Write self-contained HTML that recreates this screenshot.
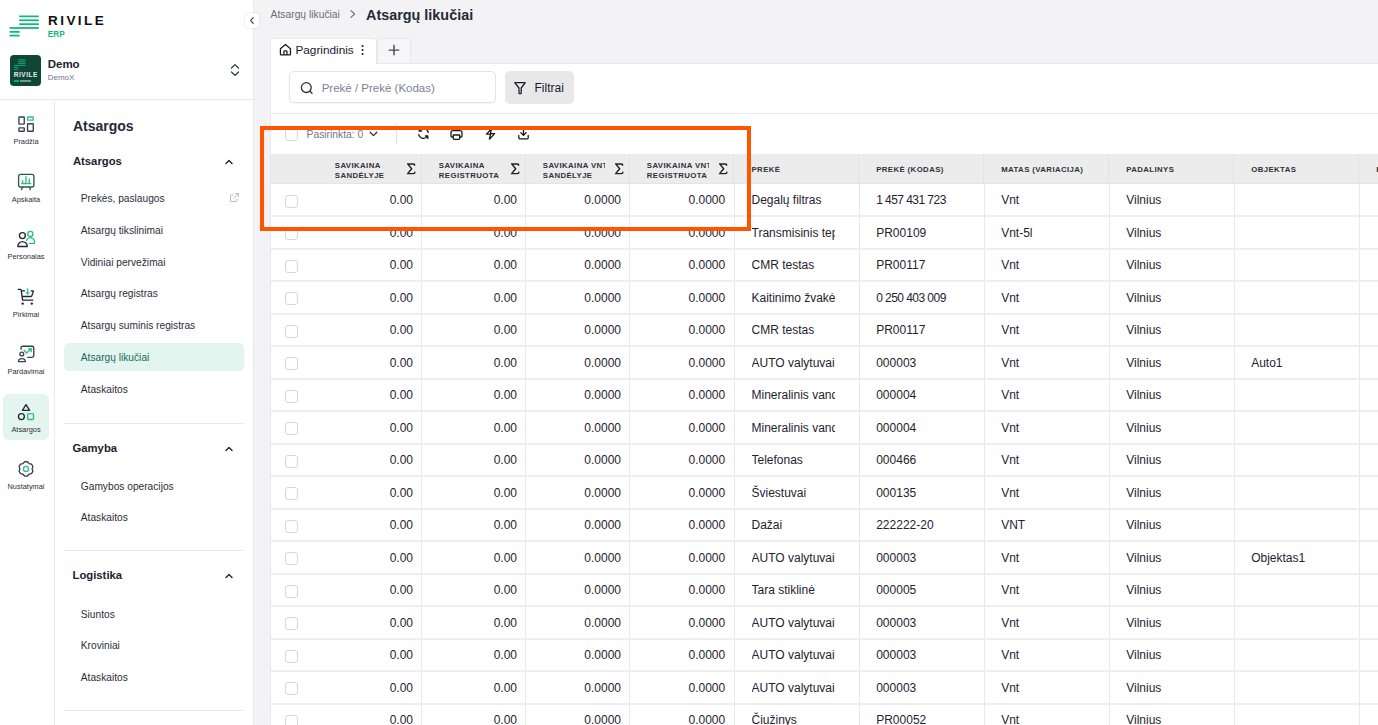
<!DOCTYPE html>
<html><head><meta charset="utf-8">
<style>
*{box-sizing:border-box;margin:0;padding:0}
html,body{width:1378px;height:725px;overflow:hidden;background:#f3f3f6;font-family:"Liberation Sans",sans-serif;color:#1f2230}
.a{position:absolute}
.t{position:absolute;white-space:nowrap;line-height:1}
</style></head><body>
<div class="a" style="left:0px;top:0px;width:253px;height:725px;background:#fff"></div>
<div class="a" style="left:253px;top:0px;width:1px;height:725px;background:#e9e9ec"></div>
<svg class="a" style="left:0px;top:0px;" width="50" height="45" viewBox="0 0 50 45" fill="none"><rect x="19.2" y="15.5" width="19.6" height="1.75" fill="#10b67a"/><rect x="19.2" y="19.4" width="19.6" height="1.75" fill="#10b67a"/><rect x="19.2" y="23.3" width="19.6" height="1.75" fill="#10b67a"/><rect x="9.6" y="27.1" width="29.2" height="1.75" fill="#10b67a"/><rect x="9.6" y="31.0" width="10" height="1.75" fill="#10b67a"/><rect x="9.6" y="34.7" width="10" height="1.75" fill="#10b67a"/></svg>
<div class="t" style="left:48.00px;top:13.87px;font-size:13.5px;font-weight:bold;color:#111;letter-spacing:2.45px;">RIVILE</div>
<div class="t" style="left:47.80px;top:31.06px;font-size:8.2px;font-weight:bold;color:#10b67a;">ERP</div>
<div class="a" style="left:10px;top:55px;width:31px;height:31px;background:#0e4735;border-radius:4px"></div>
<svg class="a" style="left:0px;top:0px;" width="50" height="90" viewBox="0 0 50 90" fill="none"><rect x="17.9" y="59.3" width="7.7" height="0.95" fill="#12a873"/><rect x="17.9" y="61.2" width="7.7" height="0.95" fill="#12a873"/><rect x="17.9" y="63.1" width="7.7" height="0.95" fill="#12a873"/><rect x="14" y="64.9" width="11.6" height="0.95" fill="#12a873"/><rect x="14" y="66.9" width="4.2" height="0.95" fill="#12a873"/><rect x="14" y="68.8" width="4.2" height="0.95" fill="#12a873"/></svg>
<div class="t" style="left:13.80px;top:71.60px;font-size:6.5px;font-weight:bold;color:#e9eeeb;letter-spacing:0.5px;">RIVILE</div>
<div class="a" style="left:14px;top:80px;width:4.5px;height:2.4px;background:#12a873"></div>
<div class="a" style="left:19.5px;top:80.3px;width:11px;height:2px;background:#c9d6d0;opacity:.55"></div>
<div class="t" style="left:47.70px;top:59.17px;font-size:11.5px;font-weight:bold;color:#1f2230;">Demo</div>
<div class="t" style="left:47.70px;top:74.23px;font-size:8px;font-weight:normal;color:#6f7590;">DemoX</div>
<svg class="a" style="left:229px;top:62px;" width="12" height="16" viewBox="0 0 12 16" fill="none"><path d="M2.5 6 L6 2.6 L9.5 6 M2.5 10 L6 13.4 L9.5 10" stroke="#2b2e3a" stroke-width="1.2" stroke-linecap="round" stroke-linejoin="round"/></svg>
<div class="a" style="left:0px;top:99px;width:253px;height:1px;background:#e9e9ec"></div>
<div class="a" style="left:54px;top:100px;width:1px;height:625px;background:#ececef"></div>
<div class="a" style="left:3px;top:394px;width:46px;height:46px;background:#e3f5ee;border-radius:6px"></div>
<svg class="a" style="left:14px;top:112px;" width="24" height="24" viewBox="0 0 24 24" fill="none"><rect x="4.95" y="4.95" width="5.3" height="7.1" rx="0.5" stroke="#3b3e4b" stroke-width="1.35" stroke-linecap="round" stroke-linejoin="round"/><rect x="4.95" y="15.85" width="5.3" height="3.4" rx="0.5" stroke="#3b3e4b" stroke-width="1.35" stroke-linecap="round" stroke-linejoin="round"/><rect x="13.55" y="4.95" width="5.7" height="3.2" rx="0.5" stroke="#2ebd86" stroke-width="1.35" stroke-linecap="round" stroke-linejoin="round"/><rect x="13.55" y="11.75" width="5.7" height="7.5" rx="0.5" stroke="#3b3e4b" stroke-width="1.35" stroke-linecap="round" stroke-linejoin="round"/></svg>
<div class="t" style="left:-34.00px;width:120px;text-align:center;top:138.24px;font-size:7.4px;font-weight:normal;color:#2b2e3a;">Pradžia</div>
<svg class="a" style="left:14px;top:170px;" width="24" height="24" viewBox="0 0 24 24" fill="none"><rect x="4.6" y="4.4" width="15.3" height="12.6" rx="2" stroke="#2f5a4c" stroke-width="1.35" stroke-linecap="round" stroke-linejoin="round"/><path d="M8.4 17.2 L7.6 19.6 M15.6 17.2 L16.4 19.6" stroke="#2f5a4c" stroke-width="1.35" stroke-linecap="round" stroke-linejoin="round"/><path d="M7.6 13.6 H16.8 M8.6 13.4 V10.6 M12 13.4 V6.6 M15.3 13.4 V9.2" stroke="#2ebd86" stroke-width="1.35" stroke-linecap="round" stroke-linejoin="round"/></svg>
<div class="t" style="left:-34.00px;width:120px;text-align:center;top:195.74px;font-size:7.4px;font-weight:normal;color:#2b2e3a;">Apskaita</div>
<svg class="a" style="left:14px;top:227px;" width="24" height="24" viewBox="0 0 24 24" fill="none"><circle cx="8.4" cy="8.6" r="2.95" stroke="#23263a" stroke-width="1.35" stroke-linecap="round" stroke-linejoin="round"/><path d="M3.8 19.5 H13.3 A4.75 4.9 0 0 0 3.8 19.5 Z" stroke="#23263a" stroke-width="1.35" stroke-linecap="round" stroke-linejoin="round"/><circle cx="16.3" cy="6.9" r="2.55" stroke="#2ebd86" stroke-width="1.35" stroke-linecap="round" stroke-linejoin="round"/><path d="M12.6 13.5 A4.1 4.1 0 0 1 20.4 16.4 H15.3" stroke="#2ebd86" stroke-width="1.35" stroke-linecap="round" stroke-linejoin="round"/></svg>
<div class="t" style="left:-34.00px;width:120px;text-align:center;top:252.74px;font-size:7.4px;font-weight:normal;color:#2b2e3a;">Personalas</div>
<svg class="a" style="left:14px;top:285px;" width="24" height="24" viewBox="0 0 24 24" fill="none"><path d="M4.3 4.4 H6.3 Q7 4.4 7.2 5.2 L8.6 15.1 H18.9 M8.2 11.5 H17 Q17.6 11.5 17.8 10.9 L19.4 6.3 Q19.5 5.9 19 5.9 H17.2 M8 5.9 H10.5" stroke="#23263a" stroke-width="1.35" stroke-linecap="round" stroke-linejoin="round"/><circle cx="8.7" cy="18.6" r="1.2" fill="#23263a"/><circle cx="17.8" cy="18.6" r="1.2" fill="#23263a"/><path d="M13.6 4 V8.5" stroke="#2ebd86" stroke-width="1.35" stroke-linecap="round" stroke-linejoin="round"/><path d="M11.4 7.3 H15.8 L13.6 9.9 Z" fill="#2ebd86"/></svg>
<div class="t" style="left:-34.00px;width:120px;text-align:center;top:310.74px;font-size:7.4px;font-weight:normal;color:#2b2e3a;">Pirkimai</div>
<svg class="a" style="left:14px;top:342px;" width="24" height="24" viewBox="0 0 24 24" fill="none"><path d="M7 7.2 V6 Q7 4.2 8.8 4.2 H18 Q19.8 4.2 19.8 6 V13.5 Q19.8 15.3 18 15.3 H13.8" stroke="#3b3e4b" stroke-width="1.35" stroke-linecap="round" stroke-linejoin="round"/><circle cx="7.8" cy="12" r="1.9" stroke="#3b3e4b" stroke-width="1.35" stroke-linecap="round" stroke-linejoin="round"/><path d="M4.5 19.6 H11.3 A3.4 3 0 0 0 4.5 19.6 Z" stroke="#3b3e4b" stroke-width="1.35" stroke-linecap="round" stroke-linejoin="round"/><path d="M10 8.2 L12.6 11 L15.6 8.2" stroke="#2ebd86" stroke-width="1.35" stroke-linecap="round" stroke-linejoin="round"/><path d="M14.2 6.5 H17.6 V9.9 Z" fill="#2ebd86" stroke="#2ebd86" stroke-width="0.8" stroke-linejoin="round"/></svg>
<div class="t" style="left:-34.00px;width:120px;text-align:center;top:367.74px;font-size:7.4px;font-weight:normal;color:#2b2e3a;">Pardavimai</div>
<svg class="a" style="left:14px;top:400px;" width="24" height="24" viewBox="0 0 24 24" fill="none"><path d="M12 4.6 L15.6 10.3 H8.4 Z" stroke="#23263a" stroke-width="1.35" stroke-linecap="round" stroke-linejoin="round"/><circle cx="7.4" cy="16.6" r="2.95" stroke="#23263a" stroke-width="1.35" stroke-linecap="round" stroke-linejoin="round"/><rect x="13.6" y="13.6" width="5.9" height="5.9" rx="1" stroke="#2ebd86" stroke-width="1.35" stroke-linecap="round" stroke-linejoin="round"/></svg>
<div class="t" style="left:-34.00px;width:120px;text-align:center;top:425.74px;font-size:7.4px;font-weight:normal;color:#2b2e3a;">Atsargos</div>
<svg class="a" style="left:14px;top:457px;" width="24" height="24" viewBox="0 0 24 24" fill="none"><path d="M8.95 6.62 L10.61 4.73 L13.39 4.73 L15.05 6.62 L17.51 7.11 L18.90 9.52 L18.10 11.90 L18.90 14.28 L17.51 16.69 L15.05 17.18 L13.39 19.07 L10.61 19.07 L8.95 17.18 L6.49 16.69 L5.10 14.28 L5.90 11.90 L5.10 9.52 L6.49 7.11 Z" stroke="#3b3e4b" stroke-width="1.35" stroke-linecap="round" stroke-linejoin="round"/><circle cx="12" cy="11.9" r="2.55" stroke="#2ebd86" stroke-width="1.35" stroke-linecap="round" stroke-linejoin="round"/></svg>
<div class="t" style="left:-34.00px;width:120px;text-align:center;top:482.74px;font-size:7.4px;font-weight:normal;color:#2b2e3a;">Nustatymai</div>
<div class="t" style="left:72.90px;top:119.05px;font-size:14px;font-weight:bold;color:#262936;">Atsargos</div>
<div class="t" style="left:72.90px;top:155.83px;font-size:11.3px;font-weight:bold;color:#1f2230;">Atsargos</div>
<svg class="a" style="left:224px;top:157.5px;" width="10" height="8" viewBox="0 0 10 8" fill="none"><path d="M2 5.6 L5 2.6 L8 5.6" stroke="#1f2230" stroke-width="1.4" stroke-linecap="round" stroke-linejoin="round"/></svg>
<div class="a" style="left:64px;top:343px;width:180px;height:28px;background:#e3f5ee;border-radius:5px"></div>
<div class="t" style="left:80.80px;top:194.17px;font-size:10.2px;font-weight:normal;color:#2b2e3a;">Prekės, paslaugos</div>
<div class="t" style="left:80.80px;top:225.97px;font-size:10.2px;font-weight:normal;color:#2b2e3a;">Atsargų tikslinimai</div>
<div class="t" style="left:80.80px;top:258.17px;font-size:10.2px;font-weight:normal;color:#2b2e3a;">Vidiniai pervežimai</div>
<div class="t" style="left:80.80px;top:289.17px;font-size:10.2px;font-weight:normal;color:#2b2e3a;">Atsargų registras</div>
<div class="t" style="left:80.80px;top:320.97px;font-size:10.2px;font-weight:normal;color:#2b2e3a;">Atsargų suminis registras</div>
<div class="t" style="left:80.80px;top:352.87px;font-size:10.2px;font-weight:normal;color:#176a5e;">Atsargų likučiai</div>
<div class="t" style="left:80.80px;top:384.67px;font-size:10.2px;font-weight:normal;color:#2b2e3a;">Ataskaitos</div>
<svg class="a" style="left:228px;top:191px;" width="13" height="13" viewBox="0 0 13 13" fill="none"><path d="M7.5 2.5 H10.5 V5.5 M10.5 2.5 L6 7 M9 8 V10 Q9 10.5 8.5 10.5 H3 Q2.5 10.5 2.5 10 V4.5 Q2.5 4 3 4 H5" stroke="#b9bcc4" stroke-width="1" stroke-linecap="round" stroke-linejoin="round"/></svg>
<div class="a" style="left:64px;top:423px;width:180px;height:1px;background:#e9e9ec"></div>
<div class="t" style="left:72.50px;top:442.83px;font-size:11.3px;font-weight:bold;color:#1f2230;">Gamyba</div>
<svg class="a" style="left:224px;top:444.5px;" width="10" height="8" viewBox="0 0 10 8" fill="none"><path d="M2 5.6 L5 2.6 L8 5.6" stroke="#1f2230" stroke-width="1.4" stroke-linecap="round" stroke-linejoin="round"/></svg>
<div class="t" style="left:80.80px;top:481.57px;font-size:10.2px;font-weight:normal;color:#2b2e3a;">Gamybos operacijos</div>
<div class="t" style="left:80.80px;top:513.27px;font-size:10.2px;font-weight:normal;color:#2b2e3a;">Ataskaitos</div>
<div class="a" style="left:64px;top:550px;width:180px;height:1px;background:#e9e9ec"></div>
<div class="t" style="left:72.50px;top:570.03px;font-size:11.3px;font-weight:bold;color:#1f2230;">Logistika</div>
<svg class="a" style="left:224px;top:571.7px;" width="10" height="8" viewBox="0 0 10 8" fill="none"><path d="M2 5.6 L5 2.6 L8 5.6" stroke="#1f2230" stroke-width="1.4" stroke-linecap="round" stroke-linejoin="round"/></svg>
<div class="t" style="left:80.80px;top:610.37px;font-size:10.2px;font-weight:normal;color:#2b2e3a;">Siuntos</div>
<div class="t" style="left:80.80px;top:641.27px;font-size:10.2px;font-weight:normal;color:#2b2e3a;">Kroviniai</div>
<div class="t" style="left:80.80px;top:673.37px;font-size:10.2px;font-weight:normal;color:#2b2e3a;">Ataskaitos</div>
<div class="a" style="left:64px;top:710px;width:180px;height:1px;background:#e9e9ec"></div>
<div class="a" style="left:245px;top:13px;width:14px;height:15px;background:#fff;border-radius:4px;box-shadow:0 0 2px rgba(0,0,0,.18)"></div>
<svg class="a" style="left:245px;top:13px;" width="14" height="15" viewBox="0 0 14 15" fill="none"><path d="M8.2 4.6 L5.6 7.5 L8.2 10.4" stroke="#2b2e3a" stroke-width="1.1" stroke-linecap="round" stroke-linejoin="round"/></svg>
<div class="t" style="left:270.60px;top:10.18px;font-size:10.3px;font-weight:normal;color:#6c6e78;">Atsargų likučiai</div>
<svg class="a" style="left:348px;top:9px;" width="10" height="10" viewBox="0 0 10 10" fill="none"><path d="M3 1.6 L6.6 5 L3 8.4" stroke="#6c6e78" stroke-width="1.1" stroke-linecap="round" stroke-linejoin="round"/></svg>
<div class="t" style="left:366.00px;top:7.81px;font-size:14.4px;font-weight:bold;color:#262936;">Atsargų likučiai</div>
<div class="a" style="left:270px;top:63px;width:1200px;height:700px;background:#fff;border:1px solid #e8e8eb"></div>
<div class="a" style="left:270px;top:38px;width:106.5px;height:26px;background:#fff;border:1px solid #e8e8eb;border-bottom:none;border-radius:4px 4px 0 0"></div>
<div class="a" style="left:377px;top:38px;width:33.5px;height:25px;background:#f6f6f8;border:1px solid #e8e8eb;border-bottom:none;border-radius:4px 4px 0 0"></div>
<svg class="a" style="left:277.6px;top:41.8px;" width="15" height="15" viewBox="0 0 15 15" fill="none"><g transform="scale(0.93)"><path d="M2.6 13.3 V7.2 L8 2.6 L13.4 7.2 V13.3 Q13.4 13.9 12.8 13.9 H3.2 Q2.6 13.9 2.6 13.3 Z M6.4 13.9 V10.2 Q6.4 9.6 7 9.6 H9 Q9.6 9.6 9.6 10.2 V13.9" stroke="#1a1a22" stroke-width="1.35" stroke-linejoin="round"/></g></svg>
<div class="t" style="left:295.40px;top:44.81px;font-size:11.8px;font-weight:normal;color:#1a1a2e;">Pagrindinis</div>
<svg class="a" style="left:359px;top:43px;" width="8" height="14" viewBox="0 0 8 14" fill="none"><circle cx="3.6" cy="3" r="1.05" fill="#1a1a22"/><circle cx="3.6" cy="7" r="1.05" fill="#1a1a22"/><circle cx="3.6" cy="11" r="1.05" fill="#1a1a22"/></svg>
<svg class="a" style="left:387px;top:43px;" width="14" height="14" viewBox="0 0 14 14" fill="none"><path d="M7 2.4 V11.8 M2.2 7.1 H11.8" stroke="#454854" stroke-width="1.45" stroke-linecap="round"/></svg>
<div class="a" style="left:288.6px;top:71.2px;width:207px;height:32.2px;background:#fff;border:1px solid #e4e4e7;border-radius:5px;box-shadow:0 1px 2px rgba(0,0,0,.05)"></div>
<svg class="a" style="left:299px;top:80px;" width="16" height="16" viewBox="0 0 16 16" fill="none"><circle cx="7.3" cy="7.6" r="4.9" stroke="#2a2c36" stroke-width="1.3"/><path d="M11 11.3 L13 13.2" stroke="#2a2c36" stroke-width="1.3" stroke-linecap="round"/></svg>
<div class="t" style="left:321.70px;top:82.67px;font-size:11.5px;font-weight:normal;color:#7d8193;">Prekė / Prekė (Kodas)</div>
<div class="a" style="left:505.2px;top:71px;width:68.7px;height:32.8px;background:#e8e8ea;border-radius:5px"></div>
<svg class="a" style="left:512px;top:80px;" width="16" height="16" viewBox="0 0 16 16" fill="none"><path d="M3.1 2.5 H12.9 Q13.3 2.5 13.1 2.9 L9.2 8 V12.9 Q9.2 13.6 8.6 13.6 H7.5 Q7 13.6 7 12.9 V8 L2.9 2.9 Q2.7 2.5 3.1 2.5 Z" stroke="#1a1a22" stroke-width="1.25" stroke-linejoin="round"/></svg>
<div class="t" style="left:534.50px;top:81.74px;font-size:12px;font-weight:normal;color:#1a1a2e;">Filtrai</div>
<div class="a" style="left:271px;top:113px;width:1200px;height:1px;background:#ececef"></div>
<div class="a" style="left:285.2px;top:128px;width:12.5px;height:13px;border:1px solid #d6d7dc;border-radius:3px;background:#fff"></div>
<div class="t" style="left:306.60px;top:130.38px;font-size:10.3px;font-weight:normal;color:#737685;">Pasirinkta: 0</div>
<svg class="a" style="left:368px;top:129px;" width="11" height="10" viewBox="0 0 11 10" fill="none"><path d="M2.2 3.3 L5.5 6.6 L8.8 3.3" stroke="#2a2c36" stroke-width="1.3" stroke-linecap="round" stroke-linejoin="round"/></svg>
<div class="a" style="left:396.2px;top:124px;width:1px;height:19.5px;background:#e3e3e6"></div>
<svg class="a" style="left:416px;top:126px;" width="15" height="15" viewBox="0 0 15 15" fill="none"><path d="M12.3 6.4 A5 5 0 0 0 3.2 5 M2.7 8.6 A5 5 0 0 0 11.8 10 M3.2 2.6 V5 H5.6 M11.8 12.4 V10 H9.4" stroke="#1a1a22" stroke-width="1.3" stroke-linecap="round" stroke-linejoin="round"/></svg>
<svg class="a" style="left:449px;top:126px;" width="15" height="15" viewBox="0 0 15 15" fill="none"><path d="M4.3 4.6 V3.4 Q4.3 2.6 5.1 2.6 H9.9 Q10.7 2.6 10.7 3.4 V4.6 M4.3 11 H3 Q2 11 2 10 V6.6 Q2 4.6 4 4.6 H11 Q13 4.6 13 6.6 V10 Q13 11 12 11 H10.7 M4.3 9 H10.7 V12.6 Q10.7 13.4 9.9 13.4 H5.1 Q4.3 13.4 4.3 12.6 Z" stroke="#1a1a22" stroke-width="1.3" stroke-linecap="round" stroke-linejoin="round"/></svg>
<svg class="a" style="left:483px;top:126px;" width="15" height="15" viewBox="0 0 15 15" fill="none"><path d="M8.6 2.6 L3.4 8.2 H7.6 L6.4 13.2 L11.6 7.6 H7.4 Z" stroke="#1a1a22" stroke-width="1.3" stroke-linecap="round" stroke-linejoin="round"/></svg>
<svg class="a" style="left:516px;top:126px;" width="15" height="15" viewBox="0 0 15 15" fill="none"><path d="M2.8 9.4 V12 Q2.8 12.8 3.6 12.8 H11.4 Q12.2 12.8 12.2 12 V9.4 M7.5 2.6 V9.4 M4.9 6.8 L7.5 9.4 L10.1 6.8" stroke="#1a1a22" stroke-width="1.3" stroke-linecap="round" stroke-linejoin="round"/></svg>
<div class="a" style="left:270.5px;top:154px;width:1110px;height:30px;background:#ececec"></div>
<div class="a" style="left:421px;top:154px;width:1px;height:30px;background:#e2e2e4"></div>
<div class="a" style="left:525px;top:154px;width:1px;height:30px;background:#e2e2e4"></div>
<div class="a" style="left:629px;top:154px;width:1px;height:30px;background:#e2e2e4"></div>
<div class="a" style="left:733px;top:154px;width:1px;height:30px;background:#e2e2e4"></div>
<div class="a" style="left:858px;top:154px;width:1px;height:30px;background:#e2e2e4"></div>
<div class="a" style="left:983px;top:154px;width:1px;height:30px;background:#e2e2e4"></div>
<div class="a" style="left:1108px;top:154px;width:1px;height:30px;background:#e2e2e4"></div>
<div class="a" style="left:1233px;top:154px;width:1px;height:30px;background:#e2e2e4"></div>
<div class="a" style="left:1358px;top:154px;width:1px;height:30px;background:#e2e2e4"></div>
<div class="a" style="left:271px;top:183px;width:1110px;height:1px;background:#e4e4e6"></div>
<div class="a" style="left:334.8px;top:158px;width:61.9px;height:24px;overflow:hidden"><div class="t" style="left:0.00px;top:3.70px;font-size:7.8px;font-weight:bold;color:#30313a;letter-spacing:0.4px;">SAVIKAINA</div>
<div class="t" style="left:0.00px;top:13.90px;font-size:7.8px;font-weight:bold;color:#30313a;letter-spacing:0.4px;">SANDĖLYJE</div>
</div><svg class="a" style="left:405.6px;top:162px;" width="11" height="13" viewBox="0 0 11 13" fill="none"><path d="M8.6 3.3 Q8.6 1.9 7.4 1.9 H1.6 L5.7 6.8 L1.6 11.6 H7.6 Q8.8 11.6 8.9 10.2" stroke="#1f2028" stroke-width="1.45" stroke-linecap="round" stroke-linejoin="round"/></svg>
<div class="a" style="left:438.8px;top:158px;width:61.9px;height:24px;overflow:hidden"><div class="t" style="left:0.00px;top:3.70px;font-size:7.8px;font-weight:bold;color:#30313a;letter-spacing:0.4px;">SAVIKAINA</div>
<div class="t" style="left:0.00px;top:13.90px;font-size:7.8px;font-weight:bold;color:#30313a;letter-spacing:0.4px;">REGISTRUOTA</div>
</div><svg class="a" style="left:509.6px;top:162px;" width="11" height="13" viewBox="0 0 11 13" fill="none"><path d="M8.6 3.3 Q8.6 1.9 7.4 1.9 H1.6 L5.7 6.8 L1.6 11.6 H7.6 Q8.8 11.6 8.9 10.2" stroke="#1f2028" stroke-width="1.45" stroke-linecap="round" stroke-linejoin="round"/></svg>
<div class="a" style="left:542.8px;top:158px;width:61.9px;height:24px;overflow:hidden"><div class="t" style="left:0.00px;top:3.70px;font-size:7.8px;font-weight:bold;color:#30313a;letter-spacing:0.4px;">SAVIKAINA VNT</div>
<div class="t" style="left:0.00px;top:13.90px;font-size:7.8px;font-weight:bold;color:#30313a;letter-spacing:0.4px;">SANDĖLYJE</div>
</div><svg class="a" style="left:613.6px;top:162px;" width="11" height="13" viewBox="0 0 11 13" fill="none"><path d="M8.6 3.3 Q8.6 1.9 7.4 1.9 H1.6 L5.7 6.8 L1.6 11.6 H7.6 Q8.8 11.6 8.9 10.2" stroke="#1f2028" stroke-width="1.45" stroke-linecap="round" stroke-linejoin="round"/></svg>
<div class="a" style="left:646.8px;top:158px;width:61.9px;height:24px;overflow:hidden"><div class="t" style="left:0.00px;top:3.70px;font-size:7.8px;font-weight:bold;color:#30313a;letter-spacing:0.4px;">SAVIKAINA VNT</div>
<div class="t" style="left:0.00px;top:13.90px;font-size:7.8px;font-weight:bold;color:#30313a;letter-spacing:0.4px;">REGISTRUOTA</div>
</div><svg class="a" style="left:717.6px;top:162px;" width="11" height="13" viewBox="0 0 11 13" fill="none"><path d="M8.6 3.3 Q8.6 1.9 7.4 1.9 H1.6 L5.7 6.8 L1.6 11.6 H7.6 Q8.8 11.6 8.9 10.2" stroke="#1f2028" stroke-width="1.45" stroke-linecap="round" stroke-linejoin="round"/></svg>
<div class="t" style="left:751.50px;top:166.40px;font-size:7.8px;font-weight:bold;color:#30313a;letter-spacing:0.4px;">PREKĖ</div>
<div class="t" style="left:876.20px;top:166.40px;font-size:7.8px;font-weight:bold;color:#30313a;letter-spacing:0.4px;">PREKĖ (KODAS)</div>
<div class="t" style="left:1001.20px;top:166.40px;font-size:7.8px;font-weight:bold;color:#30313a;letter-spacing:0.4px;">MATAS (VARIACIJA)</div>
<div class="t" style="left:1126.20px;top:166.40px;font-size:7.8px;font-weight:bold;color:#30313a;letter-spacing:0.4px;">PADALINYS</div>
<div class="t" style="left:1251.20px;top:166.40px;font-size:7.8px;font-weight:bold;color:#30313a;letter-spacing:0.4px;">OBJEKTAS</div>
<div class="t" style="left:1376.20px;top:166.40px;font-size:7.8px;font-weight:bold;color:#30313a;letter-spacing:0.4px;">E</div>
<div class="a" style="left:421px;top:184px;width:1px;height:541px;background:#e8e8ea"></div>
<div class="a" style="left:525px;top:184px;width:1px;height:541px;background:#e8e8ea"></div>
<div class="a" style="left:629px;top:184px;width:1px;height:541px;background:#e8e8ea"></div>
<div class="a" style="left:734px;top:184px;width:1px;height:541px;background:#e8e8ea"></div>
<div class="a" style="left:859px;top:184px;width:1px;height:541px;background:#e8e8ea"></div>
<div class="a" style="left:984px;top:184px;width:1px;height:541px;background:#e8e8ea"></div>
<div class="a" style="left:1109px;top:184px;width:1px;height:541px;background:#e8e8ea"></div>
<div class="a" style="left:1234px;top:184px;width:1px;height:541px;background:#e8e8ea"></div>
<div class="a" style="left:1359px;top:184px;width:1px;height:541px;background:#e8e8ea"></div>
<div class="a" style="left:271px;top:215.0px;width:1110px;height:2px;background:#eeeeef"></div>
<div class="a" style="left:285.2px;top:194.7px;width:12.5px;height:13px;border:1px solid #d6d7dc;border-radius:3px;background:#fff"></div>
<div class="t" style="right:965.00px;top:194.34px;font-size:12px;font-weight:normal;color:#1f2230;">0.00</div>
<div class="t" style="right:861.00px;top:194.34px;font-size:12px;font-weight:normal;color:#1f2230;">0.00</div>
<div class="t" style="right:757.00px;top:194.34px;font-size:12px;font-weight:normal;color:#1f2230;">0.0000</div>
<div class="t" style="right:652.80px;top:194.34px;font-size:12px;font-weight:normal;color:#1f2230;">0.0000</div>
<div class="a" style="left:751.5px;top:190.50px;width:83px;height:20px;overflow:hidden"><div class="t" style="left:0.00px;top:3.84px;font-size:12px;font-weight:normal;color:#1f2230;">Degalų filtras</div>
</div>
<div class="t" style="left:876.20px;top:194.34px;font-size:12px;font-weight:normal;color:#1f2230;word-spacing:-0.2px;letter-spacing:-0.5px;">1 457 431 723</div>
<div class="t" style="left:1001.20px;top:194.34px;font-size:12px;font-weight:normal;color:#1f2230;">Vnt</div>
<div class="t" style="left:1126.20px;top:194.34px;font-size:12px;font-weight:normal;color:#1f2230;">Vilnius</div>
<div class="a" style="left:271px;top:247.5px;width:1110px;height:2px;background:#eeeeef"></div>
<div class="a" style="left:285.2px;top:227.2px;width:12.5px;height:13px;border:1px solid #d6d7dc;border-radius:3px;background:#fff"></div>
<div class="t" style="right:965.00px;top:226.84px;font-size:12px;font-weight:normal;color:#1f2230;">0.00</div>
<div class="t" style="right:861.00px;top:226.84px;font-size:12px;font-weight:normal;color:#1f2230;">0.00</div>
<div class="t" style="right:757.00px;top:226.84px;font-size:12px;font-weight:normal;color:#1f2230;">0.0000</div>
<div class="t" style="right:652.80px;top:226.84px;font-size:12px;font-weight:normal;color:#1f2230;">0.0000</div>
<div class="a" style="left:751.5px;top:223.00px;width:83px;height:20px;overflow:hidden"><div class="t" style="left:0.00px;top:3.84px;font-size:12px;font-weight:normal;color:#1f2230;">Transmisinis tepalas</div>
</div>
<div class="t" style="left:876.20px;top:226.84px;font-size:12px;font-weight:normal;color:#1f2230;">PR00109</div>
<div class="t" style="left:1001.20px;top:226.84px;font-size:12px;font-weight:normal;color:#1f2230;">Vnt-5l</div>
<div class="t" style="left:1126.20px;top:226.84px;font-size:12px;font-weight:normal;color:#1f2230;">Vilnius</div>
<div class="a" style="left:271px;top:280.0px;width:1110px;height:2px;background:#eeeeef"></div>
<div class="a" style="left:285.2px;top:259.7px;width:12.5px;height:13px;border:1px solid #d6d7dc;border-radius:3px;background:#fff"></div>
<div class="t" style="right:965.00px;top:259.34px;font-size:12px;font-weight:normal;color:#1f2230;">0.00</div>
<div class="t" style="right:861.00px;top:259.34px;font-size:12px;font-weight:normal;color:#1f2230;">0.00</div>
<div class="t" style="right:757.00px;top:259.34px;font-size:12px;font-weight:normal;color:#1f2230;">0.0000</div>
<div class="t" style="right:652.80px;top:259.34px;font-size:12px;font-weight:normal;color:#1f2230;">0.0000</div>
<div class="a" style="left:751.5px;top:255.50px;width:83px;height:20px;overflow:hidden"><div class="t" style="left:0.00px;top:3.84px;font-size:12px;font-weight:normal;color:#1f2230;">CMR testas</div>
</div>
<div class="t" style="left:876.20px;top:259.34px;font-size:12px;font-weight:normal;color:#1f2230;">PR00117</div>
<div class="t" style="left:1001.20px;top:259.34px;font-size:12px;font-weight:normal;color:#1f2230;">Vnt</div>
<div class="t" style="left:1126.20px;top:259.34px;font-size:12px;font-weight:normal;color:#1f2230;">Vilnius</div>
<div class="a" style="left:271px;top:312.5px;width:1110px;height:2px;background:#eeeeef"></div>
<div class="a" style="left:285.2px;top:292.2px;width:12.5px;height:13px;border:1px solid #d6d7dc;border-radius:3px;background:#fff"></div>
<div class="t" style="right:965.00px;top:291.84px;font-size:12px;font-weight:normal;color:#1f2230;">0.00</div>
<div class="t" style="right:861.00px;top:291.84px;font-size:12px;font-weight:normal;color:#1f2230;">0.00</div>
<div class="t" style="right:757.00px;top:291.84px;font-size:12px;font-weight:normal;color:#1f2230;">0.0000</div>
<div class="t" style="right:652.80px;top:291.84px;font-size:12px;font-weight:normal;color:#1f2230;">0.0000</div>
<div class="a" style="left:751.5px;top:288.00px;width:83px;height:20px;overflow:hidden"><div class="t" style="left:0.00px;top:3.84px;font-size:12px;font-weight:normal;color:#1f2230;">Kaitinimo žvakė</div>
</div>
<div class="t" style="left:876.20px;top:291.84px;font-size:12px;font-weight:normal;color:#1f2230;word-spacing:-0.2px;letter-spacing:-0.5px;">0 250 403 009</div>
<div class="t" style="left:1001.20px;top:291.84px;font-size:12px;font-weight:normal;color:#1f2230;">Vnt</div>
<div class="t" style="left:1126.20px;top:291.84px;font-size:12px;font-weight:normal;color:#1f2230;">Vilnius</div>
<div class="a" style="left:271px;top:345.0px;width:1110px;height:2px;background:#eeeeef"></div>
<div class="a" style="left:285.2px;top:324.7px;width:12.5px;height:13px;border:1px solid #d6d7dc;border-radius:3px;background:#fff"></div>
<div class="t" style="right:965.00px;top:324.34px;font-size:12px;font-weight:normal;color:#1f2230;">0.00</div>
<div class="t" style="right:861.00px;top:324.34px;font-size:12px;font-weight:normal;color:#1f2230;">0.00</div>
<div class="t" style="right:757.00px;top:324.34px;font-size:12px;font-weight:normal;color:#1f2230;">0.0000</div>
<div class="t" style="right:652.80px;top:324.34px;font-size:12px;font-weight:normal;color:#1f2230;">0.0000</div>
<div class="a" style="left:751.5px;top:320.50px;width:83px;height:20px;overflow:hidden"><div class="t" style="left:0.00px;top:3.84px;font-size:12px;font-weight:normal;color:#1f2230;">CMR testas</div>
</div>
<div class="t" style="left:876.20px;top:324.34px;font-size:12px;font-weight:normal;color:#1f2230;">PR00117</div>
<div class="t" style="left:1001.20px;top:324.34px;font-size:12px;font-weight:normal;color:#1f2230;">Vnt</div>
<div class="t" style="left:1126.20px;top:324.34px;font-size:12px;font-weight:normal;color:#1f2230;">Vilnius</div>
<div class="a" style="left:271px;top:377.5px;width:1110px;height:2px;background:#eeeeef"></div>
<div class="a" style="left:285.2px;top:357.2px;width:12.5px;height:13px;border:1px solid #d6d7dc;border-radius:3px;background:#fff"></div>
<div class="t" style="right:965.00px;top:356.84px;font-size:12px;font-weight:normal;color:#1f2230;">0.00</div>
<div class="t" style="right:861.00px;top:356.84px;font-size:12px;font-weight:normal;color:#1f2230;">0.00</div>
<div class="t" style="right:757.00px;top:356.84px;font-size:12px;font-weight:normal;color:#1f2230;">0.0000</div>
<div class="t" style="right:652.80px;top:356.84px;font-size:12px;font-weight:normal;color:#1f2230;">0.0000</div>
<div class="a" style="left:751.5px;top:353.00px;width:83px;height:20px;overflow:hidden"><div class="t" style="left:0.00px;top:3.84px;font-size:12px;font-weight:normal;color:#1f2230;">AUTO valytuvai</div>
</div>
<div class="t" style="left:876.20px;top:356.84px;font-size:12px;font-weight:normal;color:#1f2230;">000003</div>
<div class="t" style="left:1001.20px;top:356.84px;font-size:12px;font-weight:normal;color:#1f2230;">Vnt</div>
<div class="t" style="left:1126.20px;top:356.84px;font-size:12px;font-weight:normal;color:#1f2230;">Vilnius</div>
<div class="t" style="left:1251.20px;top:356.84px;font-size:12px;font-weight:normal;color:#1f2230;">Auto1</div>
<div class="a" style="left:271px;top:410.0px;width:1110px;height:2px;background:#eeeeef"></div>
<div class="a" style="left:285.2px;top:389.7px;width:12.5px;height:13px;border:1px solid #d6d7dc;border-radius:3px;background:#fff"></div>
<div class="t" style="right:965.00px;top:389.34px;font-size:12px;font-weight:normal;color:#1f2230;">0.00</div>
<div class="t" style="right:861.00px;top:389.34px;font-size:12px;font-weight:normal;color:#1f2230;">0.00</div>
<div class="t" style="right:757.00px;top:389.34px;font-size:12px;font-weight:normal;color:#1f2230;">0.0000</div>
<div class="t" style="right:652.80px;top:389.34px;font-size:12px;font-weight:normal;color:#1f2230;">0.0000</div>
<div class="a" style="left:751.5px;top:385.50px;width:83px;height:20px;overflow:hidden"><div class="t" style="left:0.00px;top:3.84px;font-size:12px;font-weight:normal;color:#1f2230;">Mineralinis vanduo</div>
</div>
<div class="t" style="left:876.20px;top:389.34px;font-size:12px;font-weight:normal;color:#1f2230;">000004</div>
<div class="t" style="left:1001.20px;top:389.34px;font-size:12px;font-weight:normal;color:#1f2230;">Vnt</div>
<div class="t" style="left:1126.20px;top:389.34px;font-size:12px;font-weight:normal;color:#1f2230;">Vilnius</div>
<div class="a" style="left:271px;top:442.5px;width:1110px;height:2px;background:#eeeeef"></div>
<div class="a" style="left:285.2px;top:422.2px;width:12.5px;height:13px;border:1px solid #d6d7dc;border-radius:3px;background:#fff"></div>
<div class="t" style="right:965.00px;top:421.84px;font-size:12px;font-weight:normal;color:#1f2230;">0.00</div>
<div class="t" style="right:861.00px;top:421.84px;font-size:12px;font-weight:normal;color:#1f2230;">0.00</div>
<div class="t" style="right:757.00px;top:421.84px;font-size:12px;font-weight:normal;color:#1f2230;">0.0000</div>
<div class="t" style="right:652.80px;top:421.84px;font-size:12px;font-weight:normal;color:#1f2230;">0.0000</div>
<div class="a" style="left:751.5px;top:418.00px;width:83px;height:20px;overflow:hidden"><div class="t" style="left:0.00px;top:3.84px;font-size:12px;font-weight:normal;color:#1f2230;">Mineralinis vanduo</div>
</div>
<div class="t" style="left:876.20px;top:421.84px;font-size:12px;font-weight:normal;color:#1f2230;">000004</div>
<div class="t" style="left:1001.20px;top:421.84px;font-size:12px;font-weight:normal;color:#1f2230;">Vnt</div>
<div class="t" style="left:1126.20px;top:421.84px;font-size:12px;font-weight:normal;color:#1f2230;">Vilnius</div>
<div class="a" style="left:271px;top:475.0px;width:1110px;height:2px;background:#eeeeef"></div>
<div class="a" style="left:285.2px;top:454.7px;width:12.5px;height:13px;border:1px solid #d6d7dc;border-radius:3px;background:#fff"></div>
<div class="t" style="right:965.00px;top:454.34px;font-size:12px;font-weight:normal;color:#1f2230;">0.00</div>
<div class="t" style="right:861.00px;top:454.34px;font-size:12px;font-weight:normal;color:#1f2230;">0.00</div>
<div class="t" style="right:757.00px;top:454.34px;font-size:12px;font-weight:normal;color:#1f2230;">0.0000</div>
<div class="t" style="right:652.80px;top:454.34px;font-size:12px;font-weight:normal;color:#1f2230;">0.0000</div>
<div class="a" style="left:751.5px;top:450.50px;width:83px;height:20px;overflow:hidden"><div class="t" style="left:0.00px;top:3.84px;font-size:12px;font-weight:normal;color:#1f2230;">Telefonas</div>
</div>
<div class="t" style="left:876.20px;top:454.34px;font-size:12px;font-weight:normal;color:#1f2230;">000466</div>
<div class="t" style="left:1001.20px;top:454.34px;font-size:12px;font-weight:normal;color:#1f2230;">Vnt</div>
<div class="t" style="left:1126.20px;top:454.34px;font-size:12px;font-weight:normal;color:#1f2230;">Vilnius</div>
<div class="a" style="left:271px;top:507.5px;width:1110px;height:2px;background:#eeeeef"></div>
<div class="a" style="left:285.2px;top:487.2px;width:12.5px;height:13px;border:1px solid #d6d7dc;border-radius:3px;background:#fff"></div>
<div class="t" style="right:965.00px;top:486.84px;font-size:12px;font-weight:normal;color:#1f2230;">0.00</div>
<div class="t" style="right:861.00px;top:486.84px;font-size:12px;font-weight:normal;color:#1f2230;">0.00</div>
<div class="t" style="right:757.00px;top:486.84px;font-size:12px;font-weight:normal;color:#1f2230;">0.0000</div>
<div class="t" style="right:652.80px;top:486.84px;font-size:12px;font-weight:normal;color:#1f2230;">0.0000</div>
<div class="a" style="left:751.5px;top:483.00px;width:83px;height:20px;overflow:hidden"><div class="t" style="left:0.00px;top:3.84px;font-size:12px;font-weight:normal;color:#1f2230;">Šviestuvai</div>
</div>
<div class="t" style="left:876.20px;top:486.84px;font-size:12px;font-weight:normal;color:#1f2230;">000135</div>
<div class="t" style="left:1001.20px;top:486.84px;font-size:12px;font-weight:normal;color:#1f2230;">Vnt</div>
<div class="t" style="left:1126.20px;top:486.84px;font-size:12px;font-weight:normal;color:#1f2230;">Vilnius</div>
<div class="a" style="left:271px;top:540.0px;width:1110px;height:2px;background:#eeeeef"></div>
<div class="a" style="left:285.2px;top:519.7px;width:12.5px;height:13px;border:1px solid #d6d7dc;border-radius:3px;background:#fff"></div>
<div class="t" style="right:965.00px;top:519.34px;font-size:12px;font-weight:normal;color:#1f2230;">0.00</div>
<div class="t" style="right:861.00px;top:519.34px;font-size:12px;font-weight:normal;color:#1f2230;">0.00</div>
<div class="t" style="right:757.00px;top:519.34px;font-size:12px;font-weight:normal;color:#1f2230;">0.0000</div>
<div class="t" style="right:652.80px;top:519.34px;font-size:12px;font-weight:normal;color:#1f2230;">0.0000</div>
<div class="a" style="left:751.5px;top:515.50px;width:83px;height:20px;overflow:hidden"><div class="t" style="left:0.00px;top:3.84px;font-size:12px;font-weight:normal;color:#1f2230;">Dažai</div>
</div>
<div class="t" style="left:876.20px;top:519.34px;font-size:12px;font-weight:normal;color:#1f2230;">222222-20</div>
<div class="t" style="left:1001.20px;top:519.34px;font-size:12px;font-weight:normal;color:#1f2230;">VNT</div>
<div class="t" style="left:1126.20px;top:519.34px;font-size:12px;font-weight:normal;color:#1f2230;">Vilnius</div>
<div class="a" style="left:271px;top:572.5px;width:1110px;height:2px;background:#eeeeef"></div>
<div class="a" style="left:285.2px;top:552.2px;width:12.5px;height:13px;border:1px solid #d6d7dc;border-radius:3px;background:#fff"></div>
<div class="t" style="right:965.00px;top:551.84px;font-size:12px;font-weight:normal;color:#1f2230;">0.00</div>
<div class="t" style="right:861.00px;top:551.84px;font-size:12px;font-weight:normal;color:#1f2230;">0.00</div>
<div class="t" style="right:757.00px;top:551.84px;font-size:12px;font-weight:normal;color:#1f2230;">0.0000</div>
<div class="t" style="right:652.80px;top:551.84px;font-size:12px;font-weight:normal;color:#1f2230;">0.0000</div>
<div class="a" style="left:751.5px;top:548.00px;width:83px;height:20px;overflow:hidden"><div class="t" style="left:0.00px;top:3.84px;font-size:12px;font-weight:normal;color:#1f2230;">AUTO valytuvai</div>
</div>
<div class="t" style="left:876.20px;top:551.84px;font-size:12px;font-weight:normal;color:#1f2230;">000003</div>
<div class="t" style="left:1001.20px;top:551.84px;font-size:12px;font-weight:normal;color:#1f2230;">Vnt</div>
<div class="t" style="left:1126.20px;top:551.84px;font-size:12px;font-weight:normal;color:#1f2230;">Vilnius</div>
<div class="t" style="left:1251.20px;top:551.84px;font-size:12px;font-weight:normal;color:#1f2230;">Objektas1</div>
<div class="a" style="left:271px;top:605.0px;width:1110px;height:2px;background:#eeeeef"></div>
<div class="a" style="left:285.2px;top:584.7px;width:12.5px;height:13px;border:1px solid #d6d7dc;border-radius:3px;background:#fff"></div>
<div class="t" style="right:965.00px;top:584.34px;font-size:12px;font-weight:normal;color:#1f2230;">0.00</div>
<div class="t" style="right:861.00px;top:584.34px;font-size:12px;font-weight:normal;color:#1f2230;">0.00</div>
<div class="t" style="right:757.00px;top:584.34px;font-size:12px;font-weight:normal;color:#1f2230;">0.0000</div>
<div class="t" style="right:652.80px;top:584.34px;font-size:12px;font-weight:normal;color:#1f2230;">0.0000</div>
<div class="a" style="left:751.5px;top:580.50px;width:83px;height:20px;overflow:hidden"><div class="t" style="left:0.00px;top:3.84px;font-size:12px;font-weight:normal;color:#1f2230;">Tara stiklinė</div>
</div>
<div class="t" style="left:876.20px;top:584.34px;font-size:12px;font-weight:normal;color:#1f2230;">000005</div>
<div class="t" style="left:1001.20px;top:584.34px;font-size:12px;font-weight:normal;color:#1f2230;">Vnt</div>
<div class="t" style="left:1126.20px;top:584.34px;font-size:12px;font-weight:normal;color:#1f2230;">Vilnius</div>
<div class="a" style="left:271px;top:637.5px;width:1110px;height:2px;background:#eeeeef"></div>
<div class="a" style="left:285.2px;top:617.2px;width:12.5px;height:13px;border:1px solid #d6d7dc;border-radius:3px;background:#fff"></div>
<div class="t" style="right:965.00px;top:616.84px;font-size:12px;font-weight:normal;color:#1f2230;">0.00</div>
<div class="t" style="right:861.00px;top:616.84px;font-size:12px;font-weight:normal;color:#1f2230;">0.00</div>
<div class="t" style="right:757.00px;top:616.84px;font-size:12px;font-weight:normal;color:#1f2230;">0.0000</div>
<div class="t" style="right:652.80px;top:616.84px;font-size:12px;font-weight:normal;color:#1f2230;">0.0000</div>
<div class="a" style="left:751.5px;top:613.00px;width:83px;height:20px;overflow:hidden"><div class="t" style="left:0.00px;top:3.84px;font-size:12px;font-weight:normal;color:#1f2230;">AUTO valytuvai</div>
</div>
<div class="t" style="left:876.20px;top:616.84px;font-size:12px;font-weight:normal;color:#1f2230;">000003</div>
<div class="t" style="left:1001.20px;top:616.84px;font-size:12px;font-weight:normal;color:#1f2230;">Vnt</div>
<div class="t" style="left:1126.20px;top:616.84px;font-size:12px;font-weight:normal;color:#1f2230;">Vilnius</div>
<div class="a" style="left:271px;top:670.0px;width:1110px;height:2px;background:#eeeeef"></div>
<div class="a" style="left:285.2px;top:649.7px;width:12.5px;height:13px;border:1px solid #d6d7dc;border-radius:3px;background:#fff"></div>
<div class="t" style="right:965.00px;top:649.34px;font-size:12px;font-weight:normal;color:#1f2230;">0.00</div>
<div class="t" style="right:861.00px;top:649.34px;font-size:12px;font-weight:normal;color:#1f2230;">0.00</div>
<div class="t" style="right:757.00px;top:649.34px;font-size:12px;font-weight:normal;color:#1f2230;">0.0000</div>
<div class="t" style="right:652.80px;top:649.34px;font-size:12px;font-weight:normal;color:#1f2230;">0.0000</div>
<div class="a" style="left:751.5px;top:645.50px;width:83px;height:20px;overflow:hidden"><div class="t" style="left:0.00px;top:3.84px;font-size:12px;font-weight:normal;color:#1f2230;">AUTO valytuvai</div>
</div>
<div class="t" style="left:876.20px;top:649.34px;font-size:12px;font-weight:normal;color:#1f2230;">000003</div>
<div class="t" style="left:1001.20px;top:649.34px;font-size:12px;font-weight:normal;color:#1f2230;">Vnt</div>
<div class="t" style="left:1126.20px;top:649.34px;font-size:12px;font-weight:normal;color:#1f2230;">Vilnius</div>
<div class="a" style="left:271px;top:702.5px;width:1110px;height:2px;background:#eeeeef"></div>
<div class="a" style="left:285.2px;top:682.2px;width:12.5px;height:13px;border:1px solid #d6d7dc;border-radius:3px;background:#fff"></div>
<div class="t" style="right:965.00px;top:681.84px;font-size:12px;font-weight:normal;color:#1f2230;">0.00</div>
<div class="t" style="right:861.00px;top:681.84px;font-size:12px;font-weight:normal;color:#1f2230;">0.00</div>
<div class="t" style="right:757.00px;top:681.84px;font-size:12px;font-weight:normal;color:#1f2230;">0.0000</div>
<div class="t" style="right:652.80px;top:681.84px;font-size:12px;font-weight:normal;color:#1f2230;">0.0000</div>
<div class="a" style="left:751.5px;top:678.00px;width:83px;height:20px;overflow:hidden"><div class="t" style="left:0.00px;top:3.84px;font-size:12px;font-weight:normal;color:#1f2230;">AUTO valytuvai</div>
</div>
<div class="t" style="left:876.20px;top:681.84px;font-size:12px;font-weight:normal;color:#1f2230;">000003</div>
<div class="t" style="left:1001.20px;top:681.84px;font-size:12px;font-weight:normal;color:#1f2230;">Vnt</div>
<div class="t" style="left:1126.20px;top:681.84px;font-size:12px;font-weight:normal;color:#1f2230;">Vilnius</div>
<div class="a" style="left:271px;top:735.0px;width:1110px;height:2px;background:#eeeeef"></div>
<div class="a" style="left:285.2px;top:714.7px;width:12.5px;height:13px;border:1px solid #d6d7dc;border-radius:3px;background:#fff"></div>
<div class="t" style="right:965.00px;top:714.34px;font-size:12px;font-weight:normal;color:#1f2230;">0.00</div>
<div class="t" style="right:861.00px;top:714.34px;font-size:12px;font-weight:normal;color:#1f2230;">0.00</div>
<div class="t" style="right:757.00px;top:714.34px;font-size:12px;font-weight:normal;color:#1f2230;">0.0000</div>
<div class="t" style="right:652.80px;top:714.34px;font-size:12px;font-weight:normal;color:#1f2230;">0.0000</div>
<div class="a" style="left:751.5px;top:710.50px;width:83px;height:20px;overflow:hidden"><div class="t" style="left:0.00px;top:3.84px;font-size:12px;font-weight:normal;color:#1f2230;">Čiužinys</div>
</div>
<div class="t" style="left:876.20px;top:714.34px;font-size:12px;font-weight:normal;color:#1f2230;">PR00052</div>
<div class="t" style="left:1001.20px;top:714.34px;font-size:12px;font-weight:normal;color:#1f2230;">Vnt</div>
<div class="t" style="left:1126.20px;top:714.34px;font-size:12px;font-weight:normal;color:#1f2230;">Vilnius</div>
<div class="a" style="left:260.4px;top:126.2px;width:490.5px;height:104.4px;border:4px solid #ff5500"></div>
<!--MAIN-->
</body></html>
